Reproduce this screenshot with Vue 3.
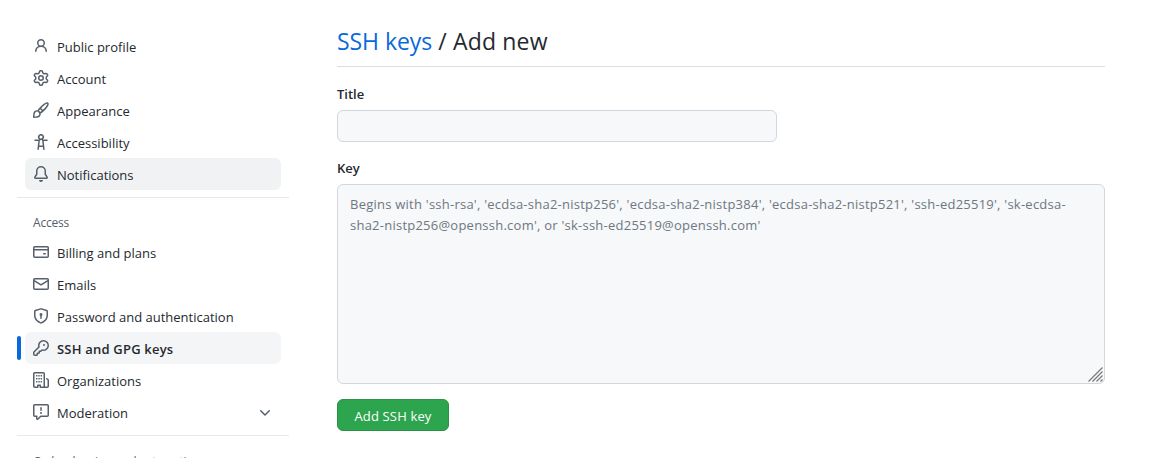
<script setup>
const icons = {
  person: 'M10.561 8.073a6.005 6.005 0 0 1 3.432 5.142.75.75 0 1 1-1.498.07 4.5 4.5 0 0 0-8.99 0 .75.75 0 0 1-1.498-.07 6.004 6.004 0 0 1 3.431-5.142 3.999 3.999 0 1 1 5.123 0ZM10.5 5a2.5 2.5 0 1 0-5 0 2.5 2.5 0 0 0 5 0Z',
  gear: 'M8 0a8.2 8.2 0 0 1 .701.031C9.444.095 9.99.645 10.16 1.29l.288 1.107c.018.066.079.158.212.224.231.114.454.243.668.386.123.082.233.09.299.071l1.103-.303c.644-.176 1.392.021 1.82.63.27.385.506.792.704 1.218.315.675.111 1.422-.364 1.891l-.814.806c-.049.048-.098.147-.088.294.016.257.016.515 0 .772-.01.147.038.246.088.294l.814.806c.475.469.679 1.216.364 1.891a7.977 7.977 0 0 1-.704 1.217c-.428.61-1.176.807-1.82.63l-1.102-.302c-.067-.019-.177-.011-.3.071a5.909 5.909 0 0 1-.668.386c-.133.066-.194.158-.211.224l-.29 1.106c-.168.646-.715 1.196-1.458 1.26a8.006 8.006 0 0 1-1.402 0c-.743-.064-1.289-.614-1.458-1.26l-.289-1.106c-.018-.066-.079-.158-.212-.224a5.738 5.738 0 0 1-.668-.386c-.123-.082-.233-.09-.299-.071l-1.103.303c-.644.176-1.392-.021-1.82-.63a8.12 8.12 0 0 1-.704-1.218c-.315-.675-.111-1.422.363-1.891l.815-.806c.05-.048.098-.147.088-.294a6.214 6.214 0 0 1 0-.772c.01-.147-.038-.246-.088-.294l-.815-.806C.635 6.045.431 5.298.746 4.623a7.92 7.92 0 0 1 .704-1.217c.428-.61 1.176-.807 1.82-.63l1.102.302c.067.019.177.011.3-.071.214-.143.437-.272.668-.386.133-.066.194-.158.211-.224l.29-1.106C6.009.645 6.556.095 7.299.03 7.53.01 7.764 0 8 0Zm-.571 1.525c-.036.003-.108.036-.137.146l-.289 1.105c-.147.561-.549.967-.998 1.189-.173.086-.34.183-.5.29-.417.278-.97.423-1.529.27l-1.103-.303c-.109-.03-.175.016-.195.045-.22.312-.412.644-.573.99-.014.031-.021.11.059.19l.815.806c.411.406.562.957.53 1.456a4.709 4.709 0 0 0 0 .582c.032.499-.119 1.05-.53 1.456l-.815.806c-.081.08-.073.159-.059.19.162.346.353.677.573.989.02.03.085.076.195.046l1.102-.303c.56-.153 1.113-.008 1.53.27.161.107.328.204.501.29.447.222.85.629.997 1.189l.289 1.105c.029.109.101.143.137.146a6.6 6.6 0 0 0 1.142 0c.036-.003.108-.036.137-.146l.289-1.105c.147-.561.549-.967.998-1.189.173-.086.34-.183.5-.29.417-.278.97-.423 1.529-.27l1.103.303c.109.029.175-.016.195-.045.22-.313.411-.644.573-.99.014-.031.021-.11-.059-.19l-.815-.806c-.411-.406-.562-.957-.53-1.456a4.709 4.709 0 0 0 0-.582c-.032-.499.119-1.05.53-1.456l.815-.806c.081-.08.073-.159.059-.19a6.464 6.464 0 0 0-.573-.989c-.02-.03-.085-.076-.195-.046l-1.102.303c-.56.153-1.113.008-1.53-.27a4.44 4.44 0 0 0-.501-.29c-.447-.222-.85-.629-.997-1.189l-.289-1.105c-.029-.11-.101-.143-.137-.146a6.6 6.6 0 0 0-1.142 0ZM11 8a3 3 0 1 1-6 0 3 3 0 0 1 6 0ZM9.5 8a1.5 1.5 0 1 0-3.001.001A1.5 1.5 0 0 0 9.5 8Z',
  brush: 'M11.134 1.535c.7-.509 1.416-.942 2.076-1.155.649-.21 1.463-.267 2.069.34.603.601.568 1.411.368 2.07-.202.668-.624 1.39-1.125 2.096-1.011 1.424-2.496 2.987-3.775 4.249-1.098 1.084-2.132 1.839-3.04 2.3a3.744 3.744 0 0 1-1.055 3.217c-.431.431-1.065.691-1.657.861-.614.177-1.294.287-1.914.357A21.151 21.151 0 0 1 .797 16H.743a.75.75 0 0 1-.743-.742v-.054a21.25 21.25 0 0 1 .13-2.284c.067-.647.187-1.287.358-1.914.17-.591.43-1.226.86-1.657a3.746 3.746 0 0 1 3.227-1.054c.466-.893 1.225-1.907 2.314-2.982 1.271-1.255 2.833-2.75 4.245-3.777ZM1.62 13.089c-.051.464-.086.929-.104 1.395.466-.018.932-.053 1.396-.104a10.511 10.511 0 0 0 1.668-.309c.526-.151.856-.325 1.011-.48a2.25 2.25 0 1 0-3.182-3.182c-.155.155-.329.485-.48 1.01a10.515 10.515 0 0 0-.309 1.67Zm10.396-10.34c-1.224.89-2.605 2.189-3.822 3.384l1.718 1.718c1.21-1.205 2.51-2.597 3.387-3.833.47-.662.78-1.227.912-1.662.134-.444.032-.551.009-.575h-.001V1.78c-.014-.014-.113-.113-.548.027-.432.14-.995.462-1.655.942Zm-4.832 7.266-.001.001a9.859 9.859 0 0 0 1.63-1.142L7.155 7.216a9.7 9.7 0 0 0-1.161 1.607c.482.302.889.71 1.19 1.192Z',
  accessibility: 'M9.923 5.302c.063.063.122.129.178.198H14A.75.75 0 0 1 14 7h-3.3l.578 5.163.362 2.997a.75.75 0 0 1-1.49.18L9.868 13H6.132l-.282 2.34a.75.75 0 0 1-1.49-.18l.362-2.997L5.3 7H2a.75.75 0 0 1 0-1.5h3.9a2.54 2.54 0 0 1 .176-.198 3 3 0 1 1 3.847 0ZM9.2 7.073h-.001a1.206 1.206 0 0 0-2.398 0L6.305 11.5h3.39ZM9.5 3a1.5 1.5 0 1 0-3.001.001A1.5 1.5 0 0 0 9.5 3Z',
  bell: 'M8 16a2 2 0 0 0 1.985-1.75c.017-.137-.097-.25-.235-.25h-3.5c-.138 0-.252.113-.235.25A2 2 0 0 0 8 16ZM3 5a5 5 0 0 1 10 0v2.947c0 .05.015.098.042.139l1.703 2.555A1.519 1.519 0 0 1 13.482 13H2.518a1.516 1.516 0 0 1-1.263-2.36l1.703-2.554A.255.255 0 0 0 3 7.947Zm5-3.5A3.5 3.5 0 0 0 4.5 5v2.947c0 .346-.102.683-.294.97l-1.703 2.556a.017.017 0 0 0-.003.01l.001.006c0 .002.002.004.004.006l.006.004.007.001h10.964l.007-.001.006-.004.004-.006.001-.007a.017.017 0 0 0-.003-.01l-1.703-2.554a1.745 1.745 0 0 1-.294-.97V5A3.5 3.5 0 0 0 8 1.5Z',
  card: 'M10.75 9a.75.75 0 0 0 0 1.5h1.5a.75.75 0 0 0 0-1.5h-1.5ZM0 3.75C0 2.784.784 2 1.75 2h12.5c.966 0 1.75.784 1.75 1.75v8.5A1.75 1.75 0 0 1 14.25 14H1.75A1.75 1.75 0 0 1 0 12.25ZM14.5 6.5h-13v5.75c0 .138.112.25.25.25h12.5a.25.25 0 0 0 .25-.25Zm0-2.75a.25.25 0 0 0-.25-.25H1.75a.25.25 0 0 0-.25.25V5h13Z',
  mail: 'M1.75 2h12.5c.966 0 1.75.784 1.75 1.75v8.5A1.75 1.75 0 0 1 14.25 14H1.75A1.75 1.75 0 0 1 0 12.25v-8.5C0 2.784.784 2 1.75 2ZM1.5 12.251c0 .138.112.25.25.25h12.5a.25.25 0 0 0 .25-.25V5.809L8.38 9.397a.75.75 0 0 1-.76 0L1.5 5.809v6.442Zm13-8.181v-.32a.25.25 0 0 0-.25-.25H1.75a.25.25 0 0 0-.25.25v.32L8 7.88Z',
  shield: 'm8.533.133 5.25 1.68A1.75 1.75 0 0 1 15 3.48V7c0 1.566-.32 3.182-1.303 4.682-.983 1.498-2.585 2.813-5.032 3.855a1.697 1.697 0 0 1-1.33 0c-2.447-1.042-4.049-2.357-5.032-3.855C1.32 10.182 1 8.566 1 7V3.48a1.755 1.755 0 0 1 1.217-1.667l5.25-1.68a1.748 1.748 0 0 1 1.066 0Zm-.61 1.429.001.001-5.25 1.68a.251.251 0 0 0-.174.237V7c0 1.36.275 2.666 1.057 3.859.784 1.194 2.121 2.342 4.366 3.298a.196.196 0 0 0 .154 0c2.245-.957 3.582-2.103 4.366-3.297C13.225 9.666 13.5 8.358 13.5 7V3.48a.25.25 0 0 0-.174-.238l-5.25-1.68a.25.25 0 0 0-.153 0ZM9.5 6.5c0 .536-.286 1.032-.75 1.3v2.45a.75.75 0 0 1-1.5 0V7.8A1.5 1.5 0 1 1 9.5 6.5Z',
  key: 'M10.5 0a5.499 5.499 0 1 1-1.288 10.848l-.932.932a.749.749 0 0 1-.53.22H7v.75a.749.749 0 0 1-.22.53l-.5.5a.749.749 0 0 1-.53.22H5v.75a.749.749 0 0 1-.22.53l-.5.5a.749.749 0 0 1-.53.22h-2A1.75 1.75 0 0 1 0 14.25v-2c0-.199.079-.389.22-.53l4.932-4.932A5.5 5.5 0 0 1 10.5 0Zm-4 5.5c-.001.431.069.86.205 1.269a.75.75 0 0 1-.181.768L1.5 12.56v1.69c0 .138.112.25.25.25h1.69l.06-.06v-1.19a.75.75 0 0 1 .75-.75h1.19l.06-.06v-1.19a.75.75 0 0 1 .75-.75h1.19l1.023-1.025a.75.75 0 0 1 .768-.18A4 4 0 1 0 6.5 5.5ZM11 6a1 1 0 1 1 0-2 1 1 0 0 1 0 2Z',
  organization: 'M1.75 16A1.75 1.75 0 0 1 0 14.25V1.75C0 .784.784 0 1.75 0h8.5C11.216 0 12 .784 12 1.75v12.5c0 .085-.006.168-.018.25h2.268a.25.25 0 0 0 .25-.25V8.285a.25.25 0 0 0-.111-.208l-1.055-.703a.749.749 0 1 1 .832-1.248l1.055.703c.487.325.779.871.779 1.456v5.965A1.75 1.75 0 0 1 14.25 16h-3.5a.766.766 0 0 1-.197-.026c-.099.017-.2.026-.303.026h-3a.75.75 0 0 1-.75-.75V14h-1v1.25a.75.75 0 0 1-.75.75Zm-.25-1.75c0 .138.112.25.25.25H4v-1.25a.75.75 0 0 1 .75-.75h2.5a.75.75 0 0 1 .75.75v1.25h2.25a.25.25 0 0 0 .25-.25V1.75a.25.25 0 0 0-.25-.25h-8.5a.25.25 0 0 0-.25.25ZM3 3h1.4v1.4H3ZM5.3 3h1.4v1.4H5.3ZM7.6 3h1.4v1.4H7.6ZM3 6h1.4v1.4H3ZM5.3 6h1.4v1.4H5.3ZM7.6 6h1.4v1.4H7.6ZM3 9h1.4v1.4H3ZM5.3 9h1.4v1.4H5.3ZM7.6 9h1.4v1.4H7.6Z',
  report: 'M0 1.75C0 .784.784 0 1.75 0h12.5C15.216 0 16 .784 16 1.75v9.5A1.75 1.75 0 0 1 14.25 13H8.06l-2.573 2.573A1.458 1.458 0 0 1 3 14.543V13H1.75A1.75 1.75 0 0 1 0 11.25Zm1.75-.25a.25.25 0 0 0-.25.25v9.5c0 .138.112.25.25.25h2a.75.75 0 0 1 .75.75v2.19l2.72-2.72a.749.749 0 0 1 .53-.22h6.5a.25.25 0 0 0 .25-.25v-9.5a.25.25 0 0 0-.25-.25Zm7 2.25v2.5a.75.75 0 0 1-1.5 0v-2.5a.75.75 0 0 1 1.5 0ZM9 9a1 1 0 1 1-2 0 1 1 0 0 1 2 0Z',
}
const general = [
  { label: 'Public profile', icon: 'person' },
  { label: 'Account', icon: 'gear' },
  { label: 'Appearance', icon: 'brush' },
  { label: 'Accessibility', icon: 'accessibility' },
  { label: 'Notifications', icon: 'bell', state: 'hovered' },
]
const access = [
  { label: 'Billing and plans', icon: 'card' },
  { label: 'Emails', icon: 'mail' },
  { label: 'Password and authentication', icon: 'shield' },
  { label: 'SSH and GPG keys', icon: 'key', state: 'current' },
  { label: 'Organizations', icon: 'organization' },
  { label: 'Moderation', icon: 'report', expandable: true },
]
const groups = [
  { items: general },
  { title: 'Access', items: access },
  { title: 'Code, planning, and automation', items: [] },
]
const placeholder = "Begins with 'ssh-rsa', 'ecdsa-sha2-nistp256', 'ecdsa-sha2-nistp384', 'ecdsa-sha2-nistp521', 'ssh-ed25519', 'sk-ecdsa-sha2-nistp256@openssh.com', or 'sk-ssh-ed25519@openssh.com'"
</script>

<template>
  <div class="page">
    <nav class="sidebar">
      <section v-for="(group, i) in groups" :key="i" class="group">
        <h3 v-if="group.title" class="group-title">{{ group.title }}</h3>
        <a v-for="item in group.items" :key="item.label" class="item" :class="item.state">
          <svg class="icon" viewBox="0 0 16 16"><path :d="icons[item.icon]" /></svg>
          <span class="label">{{ item.label }}</span>
          <svg v-if="item.expandable" class="icon chevron" viewBox="0 0 16 16">
            <path d="M12.78 5.22a.749.749 0 0 1 0 1.06l-4.25 4.25a.749.749 0 0 1-1.06 0L3.22 6.28a.749.749 0 1 1 1.06-1.06L8 8.939l3.72-3.719a.749.749 0 0 1 1.06 0Z" />
          </svg>
        </a>
      </section>
    </nav>
    <main class="content">
      <h2 class="heading"><a class="link">SSH keys</a> / Add new</h2>
      <label class="field-label">Title</label>
      <input class="title-input" type="text" />
      <label class="field-label">Key</label>
      <div class="key-box">
        <textarea class="key-input" :placeholder="placeholder"></textarea>
        <svg class="grip" viewBox="0 0 15 15">
          <path d="M0.5 14.5 14.5 0.5M4.5 14.5 14.5 4.5M8.5 14.5 14.5 8.5M12.5 14.5 14.5 12.5" />
        </svg>
      </div>
      <button class="submit">Add SSH key</button>
    </main>
  </div>
</template>

<style>
body {
  background: #fff;
  overflow: hidden;
}
</style>

<style scoped>
.page {
  display: flex;
  box-sizing: border-box;
  height: 458px;
  overflow: hidden;
  font-family: "Open Sans", "Noto Sans", sans-serif;
  font-size: 13px;
  line-height: 20px;
  color: #24292f;
}
.sidebar {
  width: 272px;
  flex: none;
  margin-left: 17px;
  padding-top: 30px;
}
.group + .group {
  margin-top: 7px;
  border-top: 1px solid #e6e8eb;
}
.group-title {
  margin: 0;
  padding: 16px 16px 4px;
  font-size: 12px;
  line-height: 18px;
  font-weight: 500;
  letter-spacing: -0.2px;
  color: #57606a;
}
.group:last-child .group-title {
  padding-top: 17px;
  letter-spacing: -0.43px;
}
.item {
  position: relative;
  display: flex;
  align-items: center;
  gap: 8px;
  height: 32px;
  margin: 0 8px;
  padding: 0 8px;
  box-sizing: border-box;
  border-radius: 6px;
}
.icon {
  width: 16px;
  height: 16px;
  flex: none;
  fill: #57606a;
}
.chevron {
  margin-top: 2px;
}
.label {
  flex: 1;
  padding-top: 1px;
  white-space: nowrap;
}
.hovered {
  background: #f0f2f4;
}
.current {
  background: #f4f5f7;
  font-weight: 600;
  letter-spacing: 0.2px;
}
.current::before {
  content: "";
  position: absolute;
  left: -8px;
  top: 4px;
  width: 4px;
  height: 24px;
  border-radius: 6px;
  background: #0969da;
}
.content {
  display: flex;
  flex-direction: column;
  align-items: flex-start;
  width: 768px;
  margin-left: 48px;
  padding-top: 24px;
}
.heading {
  width: 100%;
  height: 43px;
  margin: 0 0 17px;
  box-sizing: border-box;
  border-bottom: 1px solid #d8dee4;
  font-size: 23px;
  font-weight: 400;
  line-height: 34px;
  letter-spacing: 0.15px;
}
.link {
  color: #0969da;
  letter-spacing: -0.05px;
}
.field-label {
  margin-bottom: 5px;
  line-height: 21px;
  font-weight: 600;
}
.title-input,
.key-input {
  box-sizing: border-box;
  margin: 0;
  border: 1px solid #d0d7de;
  border-radius: 6px;
  background: #f6f8fa;
  font: inherit;
  outline: none;
}
.title-input {
  width: 440px;
  height: 32px;
  margin-bottom: 16px;
}
.key-box {
  position: relative;
  width: 768px;
  height: 200px;
  margin-bottom: 15px;
}
.key-input {
  display: block;
  width: 100%;
  height: 100%;
  padding: 9px 12px;
  line-height: 21px;
  letter-spacing: 0.24px;
  resize: none;
  overflow: hidden;
}
.key-input::placeholder {
  color: #6e7781;
  opacity: 1;
}
.grip {
  position: absolute;
  right: 2px;
  bottom: 2px;
  width: 15px;
  height: 15px;
  fill: none;
  stroke: #777;
  stroke-width: 1.2;
}
.submit {
  width: 112px;
  height: 32px;
  padding: 2px 0 0;
  box-sizing: border-box;
  border: 1px solid #2a9147;
  border-radius: 6px;
  background: #2da44e;
  font: inherit;
  letter-spacing: 0.15px;
  color: #fff;
}
</style>
